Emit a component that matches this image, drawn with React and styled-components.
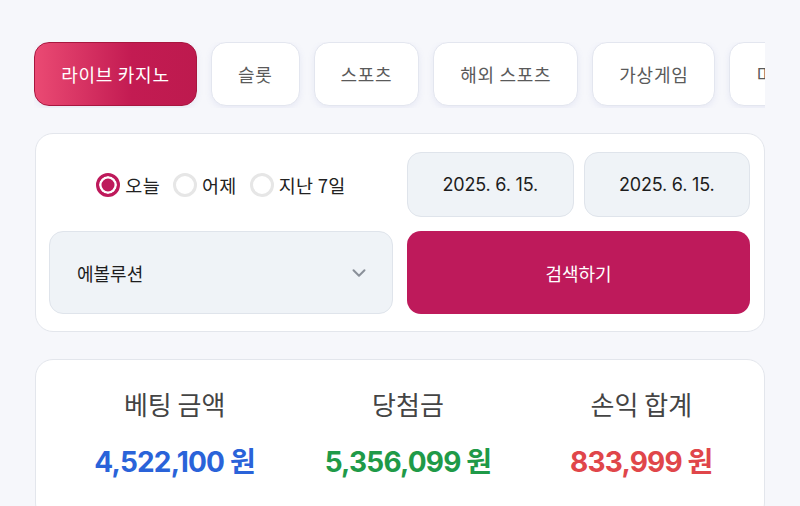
import React from 'react'
import styled, { createGlobalStyle } from 'styled-components'

const GlobalStyle = createGlobalStyle`
    body {
        margin: 0;
        background: #f6f7fb;
        font-family: "Inter", "Noto Sans CJK KR", sans-serif;
    }
`

const tabs = ['라이브 카지노', '슬롯', '스포츠', '해외 스포츠', '가상게임', '미니게임']
const radios = ['오늘', '어제', '지난 7일']

const stats = [
    { label: '베팅 금액', value: '4,522,100 원', color: '#2a63d9' },
    { label: '당첨금', value: '5,356,099 원', color: '#1f9a48' },
    { label: '손익 합계', value: '833,999 원', color: '#e0464a' },
]

const App = () => {
    return (
        <Page>
            <GlobalStyle />
            <TabStrip>
                {tabs.map((t, i) => (
                    <Tab key={t} active={i === 0}>{t}</Tab>
                ))}
            </TabStrip>

            <FilterCard>
                <RadioGroup>
                    {radios.map((r, i) => (
                        <RadioItem key={r}>
                            <RadioDot checked={i === 0} />
                            {r}
                        </RadioItem>
                    ))}
                </RadioGroup>
                <DateRow>
                    <DateInput>2025. 6. 15.</DateInput>
                    <DateInput>2025. 6. 15.</DateInput>
                </DateRow>
                <Select>
                    에볼루션
                    <svg width="22" height="22" viewBox="0 0 24 24" fill="none" stroke="#8a9099" strokeWidth="2.2" strokeLinecap="round" strokeLinejoin="round">
                        <path d="M6 9l6 6 6-6" />
                    </svg>
                </Select>
                <SearchButton>검색하기</SearchButton>
            </FilterCard>

            <SummaryCard>
                {stats.map((s) => (
                    <Stat key={s.label}>
                        <StatLabel>{s.label}</StatLabel>
                        <StatValue color={s.color}>{s.value}</StatValue>
                    </Stat>
                ))}
            </SummaryCard>
        </Page>
    )
}

export default App

const Page = styled.div`
    width: 800px;
    height: 506px;
    overflow: hidden;
    padding: 42px 35px 0 34px;
    box-sizing: border-box;
    display: flex;
    flex-direction: column;
`

const TabStrip = styled.div`
    display: flex;
    gap: 14px;
    overflow: hidden;
    padding-bottom: 2px;
    flex-shrink: 0;
`

const Tab = styled.div`
    flex-shrink: 0;
    height: 64px;
    box-sizing: border-box;
    padding: 0 26px;
    display: flex;
    align-items: center;
    justify-content: center;
    border-radius: 15px;
    font-size: 18px;
    letter-spacing: 0.7px;
    font-family: "Noto Sans CJK KR", sans-serif;
    color: ${p => (p.active ? '#fff' : '#5a5a5a')};
    background: ${p => (p.active ? 'linear-gradient(90deg, #ea4a73 0%, #c31b52 60%, #bd1a4e 100%)' : '#fff')};
    border: 1px solid ${p => (p.active ? '#a8173f' : '#e3e6ef')};
    box-shadow: 0 2px 6px rgba(120, 130, 200, 0.12);
    width: ${p => (p.active ? '163px' : 'auto')};
`

const FilterCard = styled.div`
    margin-top: 25px;
    margin-left: 1px;
    background: #fff;
    border: 1.5px solid #e3e6ec;
    border-radius: 18px;
    padding: 18px 14px 17px 13px;
    display: grid;
    grid-template-columns: 344px 343px;
    grid-template-rows: 65px 83px;
    gap: 14px;
`

const RadioGroup = styled.div`
    display: flex;
    align-items: center;
    justify-content: center;
    gap: 13px;
`

const RadioItem = styled.label`
    display: flex;
    align-items: center;
    gap: 5px;
    font-size: 18.5px;
    letter-spacing: 0.3px;
    color: #222;
    font-family: "Noto Sans CJK KR", sans-serif;
`

const RadioDot = styled.span`
    width: 24px;
    height: 24px;
    box-sizing: border-box;
    border-radius: 50%;
    border: ${p => (p.checked ? '3.5px solid #be1a5b' : '3.5px solid #e6e6e6')};
    background: ${p => (p.checked ? '#be1a5b' : '#fff')};
    box-shadow: ${p => (p.checked ? 'inset 0 0 0 2.5px #fff' : 'none')};
`

const DateRow = styled.div`
    display: grid;
    grid-template-columns: 1fr 1fr;
    gap: 10px;
`

const DateInput = styled.div`
    background: #eff3f7;
    border: 1.5px solid #dfe4eb;
    border-radius: 14px;
    display: flex;
    align-items: center;
    justify-content: center;
    font-size: 18px;
    letter-spacing: -0.2px;
    color: #1d1d1d;
`

const Select = styled.div`
    background: #eff3f7;
    border: 1.5px solid #dfe4eb;
    border-radius: 14px;
    display: flex;
    align-items: center;
    justify-content: space-between;
    padding: 0 22px 0 27px;
    font-size: 18px;
    color: #1d1d1d;
    font-family: "Noto Sans CJK KR", sans-serif;
`

const SearchButton = styled.button`
    border: none;
    border-radius: 14px;
    background: #be1a5b;
    color: #fff;
    font-size: 18px;
    font-family: "Noto Sans CJK KR", sans-serif;
    cursor: pointer;
`

const SummaryCard = styled.div`
    margin-top: 27px;
    margin-left: 1px;
    background: #fff;
    border: 1.5px solid #e3e6ec;
    border-radius: 18px;
    padding: 25px 6px 40px 22px;
    display: grid;
    grid-template-columns: repeat(3, 1fr);
`

const Stat = styled.div`
    display: flex;
    flex-direction: column;
    align-items: center;
    gap: 18px;
`

const StatLabel = styled.div`
    font-size: 26px;
    color: #444;
    font-family: "Noto Sans CJK KR", sans-serif;
`

const StatValue = styled.div`
    font-size: 28px;
    font-weight: 700;
    letter-spacing: -0.8px;
    color: ${p => p.color};
`
